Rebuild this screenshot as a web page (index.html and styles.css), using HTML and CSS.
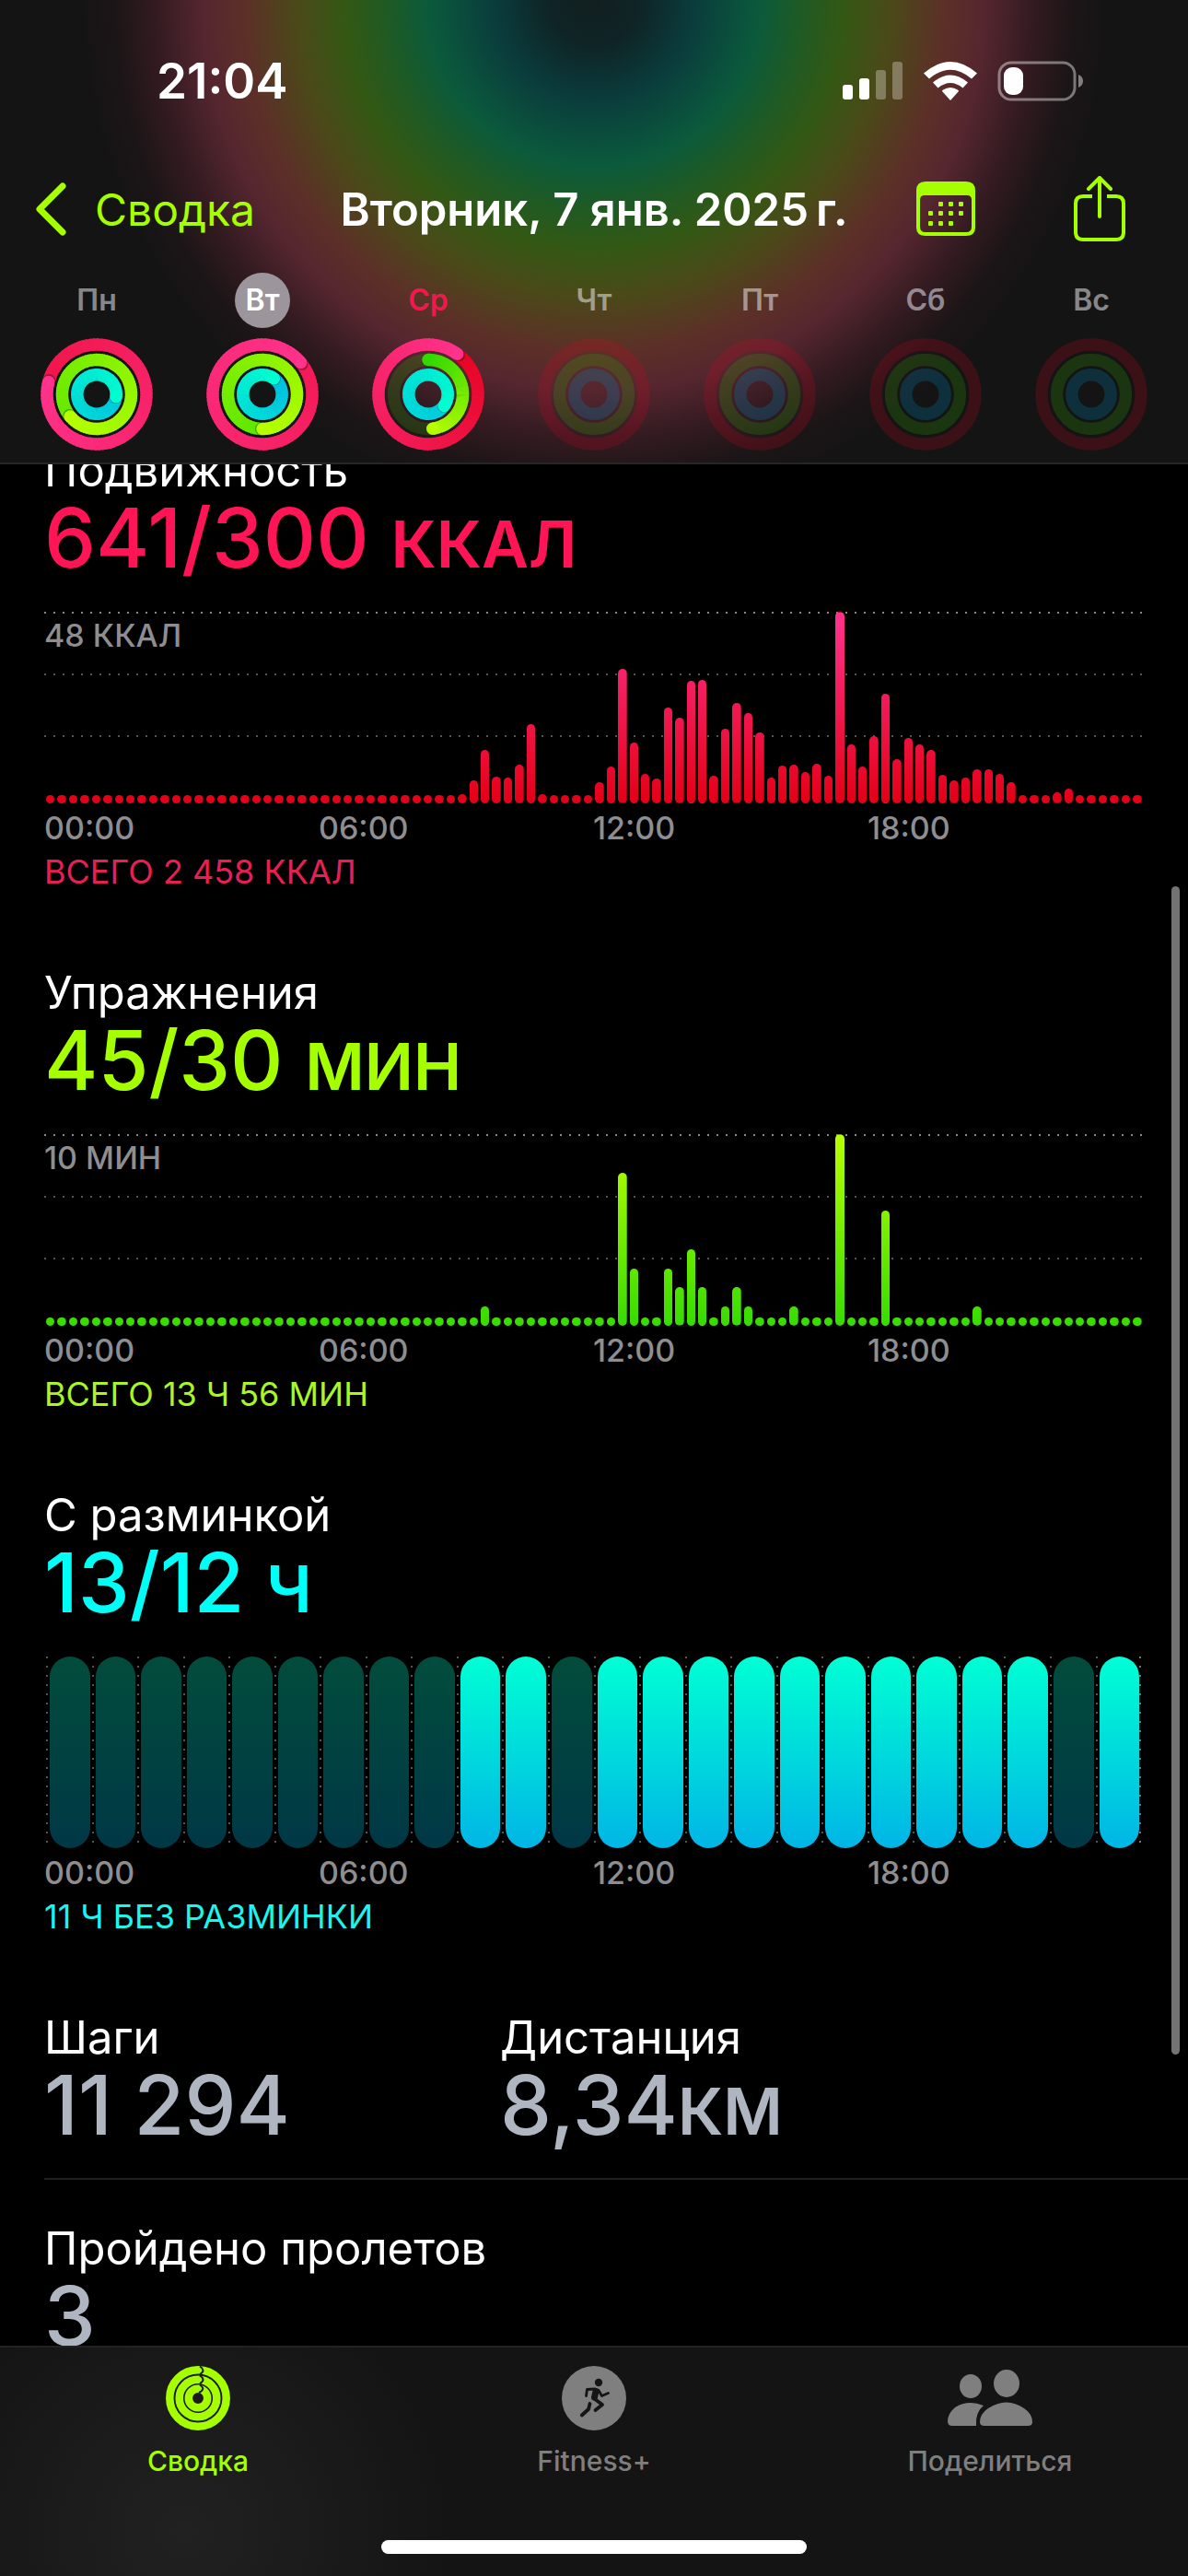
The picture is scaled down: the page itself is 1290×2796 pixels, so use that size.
FILE: index.html
```html
<!DOCTYPE html>
<html lang="ru">
	<head>
		<meta charset="utf-8">
		<title>Фитнес</title>
		<meta name="viewport" content="width=device-width, initial-scale=1">
		<link rel="stylesheet" href="styles.css">
	</head>
	<body>
		<header class="header">
			<!-- Строка состояния -->
			<div class="status">
				<span class="status-time">21:04</span>
				<div class="status-icons">
					<svg width="66" height="42" viewBox="0 0 66 42" fill="#fff">
						<rect x="0" y="25" width="11" height="16" rx="3"/>
						<rect x="18" y="18" width="11" height="23" rx="3"/>
						<rect x="36" y="9" width="11" height="32" rx="3" opacity="0.3"/>
						<rect x="54" y="0" width="11" height="41" rx="3" opacity="0.3"/>
					</svg>
					<svg width="58" height="42" viewBox="0 0 58 42" fill="#fff">
						<path d="M29 42 L20 32 Q20 31 21 30.500 Q29 25.500 37 30.500 Q38 31 38 32 Z"/>
						<path d="M10 22.500 Q29 6.500 48 22.500 L42.500 28.500 Q29 17.500 15.500 28.500 Z"/>
						<path d="M0 12.500 Q29 -12.500 58 12.500 L52 18.500 Q29 -1 6 18.500 Z"/>
					</svg>
					<svg width="94" height="44" viewBox="0 0 94 44">
						<rect x="2" y="2" width="82" height="40" rx="13" fill="none" stroke="#fff" stroke-opacity="0.42" stroke-width="3"/>
						<rect x="7" y="7" width="21" height="30" rx="9" fill="#fff"/>
						<path d="M88 15 q5 2 5 7 t-5 7 Z" fill="#fff" opacity="0.45"/>
					</svg>
				</div>
			</div>

			<!-- Навигация -->
			<nav class="nav">
				<a class="back" href="#">
					<svg width="34" height="58" viewBox="0 0 34 58" fill="none" stroke="currentColor" stroke-width="7" stroke-linecap="round" stroke-linejoin="round">
						<path d="M29 4 L4 29 L29 54"/>
					</svg>
					Сводка
				</a>
				<h1 class="title">Вторник, 7 янв. 2025&#8239;г.</h1>
				<div class="actions">
					<button class="action" aria-label="Календарь">
						<svg width="64" height="60" viewBox="0 0 64 60" fill="currentColor">
							<path fill-rule="evenodd" d="M10 0 H54 Q64 0 64 10 V50 Q64 59 54 59 H10 Q0 59 0 50 V10 Q0 0 10 0 Z M9 15 Q4 15 4 20 V49 Q4 55 10 55 H54 Q60 55 60 49 V20 Q60 15 55 15 Z"/>
							<g>
								<rect x="24" y="22" width="5" height="5" rx="1"/><rect x="35" y="22" width="5" height="5" rx="1"/><rect x="46" y="22" width="5" height="5" rx="1"/>
								<rect x="13" y="32" width="5" height="5" rx="1"/><rect x="24" y="32" width="5" height="5" rx="1"/><rect x="35" y="32" width="5" height="5" rx="1"/><rect x="46" y="32" width="5" height="5" rx="1"/>
								<rect x="13" y="43" width="5" height="5" rx="1"/><rect x="24" y="43" width="5" height="5" rx="1"/><rect x="35" y="43" width="5" height="5" rx="1"/>
							</g>
						</svg>
					</button>
					<button class="action" aria-label="Поделиться">
						<svg width="58" height="72" viewBox="0 0 58 72" fill="none" stroke="currentColor" stroke-width="4" stroke-linecap="round" stroke-linejoin="round">
							<path stroke-linecap="butt" d="M21 22 H11 Q3 22 3 30 V61 Q3 69 11 69 H47 Q55 69 55 61 V30 Q55 22 47 22 H37"/>
							<path d="M29 44 V3 M17 14 L29 2 L41 14"/>
						</svg>
					</button>
				</div>
			</nav>

			<!-- Дни недели, кольца рисует script.js -->
			<div class="week">
				<button class="day" data-rings="1.79 1.64 1.27"><span class="day-name">Пн</span></button>
				<button class="day selected" data-rings="2.14 1.5 1.1"><span class="day-name">Вт</span></button>
				<button class="day today" data-rings="1.1 0.48 1.35"><span class="day-name">Ср</span></button>
				<button class="day" data-rings="0 0 0"><span class="day-name">Чт</span></button>
				<button class="day" data-rings="0 0 0"><span class="day-name">Пт</span></button>
				<button class="day" data-rings="0 0 0"><span class="day-name">Сб</span></button>
				<button class="day" data-rings="0 0 0"><span class="day-name">Вс</span></button>
			</div>
		</header>

		<main class="content">
			<section class="card move">
				<h2 class="card-title">Подвижность</h2>
				<p class="card-value">641/300 <span class="unit">ккал</span></p>
				<div class="chart" id="move-chart">
					<span class="chart-max">48 ККАЛ</span>
				</div>
				<div class="axis"><span>00:00</span><span>06:00</span><span>12:00</span><span>18:00</span></div>
				<p class="total">ВСЕГО 2 458 ККАЛ</p>
			</section>

			<section class="card exercise">
				<h2 class="card-title">Упражнения</h2>
				<p class="card-value">45/30 <span class="unit">мин</span></p>
				<div class="chart" id="exercise-chart">
					<span class="chart-max">10 МИН</span>
				</div>
				<div class="axis"><span>00:00</span><span>06:00</span><span>12:00</span><span>18:00</span></div>
				<p class="total">ВСЕГО 13 Ч 56 МИН</p>
			</section>

			<section class="card stand">
				<h2 class="card-title">С разминкой</h2>
				<p class="card-value">13/12 <span class="unit">ч</span></p>
				<div class="hours" id="stand-chart"></div>
				<div class="axis"><span>00:00</span><span>06:00</span><span>12:00</span><span>18:00</span></div>
				<p class="total">11 Ч БЕЗ РАЗМИНКИ</p>
			</section>

			<div class="metrics">
				<div class="metric">
					<h2 class="card-title">Шаги</h2>
					<p class="card-value">11 294</p>
				</div>
				<div class="metric">
					<h2 class="card-title">Дистанция</h2>
					<p class="card-value">8,34<span class="unit">км</span></p>
				</div>
			</div>
			<div class="metrics">
				<div class="metric">
					<h2 class="card-title">Пройдено пролетов</h2>
					<p class="card-value">3</p>
				</div>
			</div>

			<div class="scrollbar"></div>
		</main>

		<!-- Нижние вкладки -->
		<footer class="tabbar">
			<nav class="tabs">
				<a class="tab active" href="#">
					<svg width="70" height="70" viewBox="0 0 70 70" fill="none" stroke="currentColor" stroke-width="8.500">
						<circle cx="35" cy="35" r="30.700"/>
						<circle cx="35" cy="35" r="20.300"/>
						<circle cx="35" cy="35" r="10.200"/>
						<path stroke="#161a10" stroke-width="2" d="M37 0.500 Q44 5 37 9 M37 10.500 Q44 15 37 19 M37 20.500 Q44 25 36 29"/>
					</svg>
					Сводка
				</a>
				<a class="tab" href="#">
					<svg width="70" height="70" viewBox="0 0 70 70" fill="none" stroke="#151515" stroke-linecap="round" stroke-linejoin="round">
						<circle cx="35" cy="35" r="35" fill="currentColor" stroke="none"/>
						<circle cx="40" cy="18" r="4.200" fill="#151515" stroke="none"/>
						<path stroke-width="2.800" d="M26.500 32.500 L27.500 25.500 L36 25 M40 26.500 L43.500 32.500 L50.500 29.500"/>
						<path stroke-width="7" d="M37 27.500 L35.500 34"/>
						<path stroke-width="3.800" d="M36 36 L44 42 L36.500 48 M30.500 41 L29 47 L21.800 53.500"/>
					</svg>
					Fitness+
				</a>
				<a class="tab" href="#">
					<svg width="94" height="70" viewBox="0 0 94 70" fill="currentColor">
						<ellipse cx="26" cy="22" rx="12" ry="13"/>
						<ellipse cx="65" cy="19" rx="14" ry="15"/>
						<path d="M1 60 Q1 52 9 45 Q23 36 40 43 Q31 50 32 65 H6 Q1 65 1 60 Z"/>
						<path d="M36 61 Q36 52 45 46 Q65 33 84 46 Q93 52 93 61 Q93 65 88 65 H41 Q36 65 36 61 Z"/>
					</svg>
					Поделиться
				</a>
			</nav>
			<div class="home-indicator"></div>
		</footer>

		<script src="script.js"></script>
	</body>
</html>
```

FILE: styles.css
```css
* {
	margin: 0;
	padding: 0;
	box-sizing: border-box;
}

body {
	font-family: Inter, "Liberation Sans", sans-serif;
	background-color: #000;
	color: #fff;
	height: 100vh;
	overflow: hidden;
	display: flex;
	flex-direction: column;
}

button {
	background: none;
	border: none;
	color: inherit;
	font: inherit;
}

a {
	color: inherit;
	text-decoration: none;
}

svg {
	display: block;
}

/* Шапка */
.header {
	position: relative;
	z-index: 2;
	padding-bottom: 13px;
	border-bottom: 2px solid #262626;
	background: radial-gradient(circle at 50% 0,
		#121f20 0, #0f2426 50px, #0a3c3c 108px, #0b5a3c 180px, #1f5a24 226px, #335814 270px,
		#4a4a18 320px, #5c3028 380px, #55262f 425px, #341b21 475px, #1c1517 520px, #141414 560px);
}

.status {
	height: 176px;
	padding: 0 113px 0 170px;
	display: flex;
	align-items: center;
	justify-content: space-between;
}

.status-time {
	font-size: 53px;
	font-weight: 600;
}

.status-icons {
	display: flex;
	align-items: center;
	gap: 22px;
}

.nav {
	height: 102px;
	padding: 0 39px;
	display: grid;
	grid-template-columns: 1fr auto 1fr;
	align-items: center;
	color: #a6ff00;
}

.back {
	display: flex;
	align-items: center;
	gap: 30px;
	font-size: 48px;
}

.title {
	color: #fff;
	font-size: 49px;
	font-weight: 600;
	white-space: nowrap;
}

.actions {
	display: flex;
	align-items: center;
	justify-content: flex-end;
	gap: 106px;
	padding-right: 28px;
}

.week {
	display: grid;
	grid-template-columns: repeat(7, 1fr);
	padding: 18px 15px 0;
}

.day {
	display: flex;
	flex-direction: column;
	align-items: center;
	gap: 11px;
}

.day-name {
	width: 60px;
	height: 60px;
	line-height: 60px;
	border-radius: 50%;
	font-size: 32px;
	font-weight: 600;
	color: rgba(235, 235, 245, 0.55);
}

.selected .day-name {
	background-color: #9c959b;
	color: #fff;
}

.today .day-name {
	color: #f0194d;
}

/* Содержимое, прокручено под шапку */
.content {
	position: relative;
	flex: 1;
	min-height: 0;
	margin-top: -23px;
	padding-left: 48px;
}

.card {
	padding-right: 50px;
	margin-bottom: 75px;
}

.card-title {
	font-size: 49px;
	font-weight: 400;
	line-height: 60px;
}

.card-value {
	font-size: 89px;
	font-weight: 500;
	line-height: 86px;
	white-space: nowrap;
}

.unit {
	font-size: 70px;
	font-weight: 600;
	line-height: 60px;
	text-transform: uppercase;
}

.move .card-value { color: #ff1455; }
.exercise .card-value { color: #a6ff00; }
.stand .card-value { color: #00fff6; }

/* Столбчатые графики */
.chart {
	position: relative;
	height: 208px;
	margin-top: 37px;
	display: flex;
	align-items: flex-end;
}

.gridline {
	position: absolute;
	left: 0;
	right: 0;
	height: 2px;
	background: repeating-linear-gradient(to right, #555 0, #555 2px, transparent 2px, transparent 10px);
}

.gridline:first-of-type {
	filter: brightness(1.6);
}

.chart-max {
	position: absolute;
	top: 8px;
	left: 0;
	font-size: 34px;
	line-height: 36px;
	font-weight: 500;
	color: #8e8e91;
}

.bar {
	position: relative;
	flex: 1;
	min-height: 9px;
	margin: 0 1px 0 2px;
	border-radius: 5px;
	background-position: bottom;
	background-size: 100% 207px;
}

.move .bar { background-image: linear-gradient(to top, #e30016, #ff3290); }
.exercise .bar { background-image: linear-gradient(to top, #36dc00, #b8ff00); }

/* Часы с разминкой */
.hours {
	height: 208px;
	margin: 37px 1px 0 2px;
	display: flex;
	background: repeating-linear-gradient(to bottom, #777 0, #777 2px, transparent 2px, transparent 10px) right / 2px 100% no-repeat;
}

.hour {
	flex: 1;
	padding: 0 2px 0 4px;
	background: repeating-linear-gradient(to bottom, #555 0, #555 2px, transparent 2px, transparent 10px) left / 2px 100% no-repeat;
}

.pill {
	height: 100%;
	border-radius: 22px;
	background: linear-gradient(to bottom, #024c3c, #003846);
}

.pill.on {
	background: linear-gradient(to bottom, #00ffd4, #00b5e6);
}

.axis {
	display: grid;
	grid-template-columns: repeat(4, 1fr);
	margin-top: 7px;
	font-size: 34px;
	font-weight: 500;
	line-height: 40px;
	color: #8e8e91;
}

.total {
	font-size: 36px;
	line-height: 54px;
}

.move .total { color: #e81f55; }
.exercise .total { color: #a8f722; }
.stand .total { color: #1cf5ea; }

/* Показатели */
.metrics {
	display: grid;
	grid-template-columns: 495px 1fr;
	padding-bottom: 36px;
	margin-bottom: 45px;
	border-bottom: 2px solid #202022;
}

.metric .card-value {
	color: #b0b5c2;
}

.scrollbar {
	position: absolute;
	top: 23.3%;
	right: 9px;
	width: 9px;
	height: 61.4%;
	border-radius: 5px;
	background-color: #737373;
}

/* Нижняя панель */
.tabbar {
	position: relative;
	z-index: 2;
	height: 250px;
	padding: 20px 0 24px;
	border-top: 2px solid #222;
	display: flex;
	flex-direction: column;
	justify-content: space-between;
	background: radial-gradient(circle at 200px 200px, #212121 0, #1b1b1b 140px, #141414 290px);
}

.tabs {
	display: grid;
	grid-template-columns: repeat(3, 1fr);
}

.tab {
	display: flex;
	flex-direction: column;
	align-items: center;
	gap: 15px;
	font-size: 30px;
	line-height: 36px;
	font-weight: 500;
	color: #7f7f7f;
}

.tab.active {
	color: #a6ff00;
}

.home-indicator {
	width: 462px;
	height: 15px;
	margin: 0 auto;
	border-radius: 8px;
	background-color: #fff;
}
```

FILE: script.js
```js
// Данные по 15 минут: сначала пустые интервалы, затем значения
const moveData = new Array(96).fill(0);
const moveValues = {
	36: [10, 25, 58, 29, 28, 42, 86, 10],
	48: [23, 40, 145, 66, 32, 27, 104, 93, 132, 133, 30, 81, 108, 98, 77, 28, 41, 42, 34, 43, 30,
		207, 64, 40, 73, 118, 48, 71, 64, 58, 31, 25, 28, 37, 37, 32, 23],
	88: [12, 16]
};
for (const start in moveValues) {
	moveValues[start].forEach((v, i) => moveData[Number(start) + i] = v);
}

const exerciseData = new Array(96).fill(0);
Object.entries({38: 1, 50: 8, 51: 3, 54: 3, 55: 2, 56: 4, 57: 2, 59: 1, 60: 2, 61: 1, 65: 1, 69: 10, 73: 6, 81: 1})
	.forEach(([i, v]) => exerciseData[i] = v);

const standHours = [9, 10, 12, 13, 14, 15, 16, 17, 18, 19, 20, 21, 23];

function drawChart(id, data) {
	const chart = document.getElementById(id);
	const max = Math.max(...data);
	for (let i = 0; i < 3; i++) {
		const line = document.createElement('div');
		line.className = 'gridline';
		line.style.top = i * 32.2 + '%';
		chart.appendChild(line);
	}
	data.forEach(v => {
		const bar = document.createElement('div');
		bar.className = 'bar';
		bar.style.height = v / max * 100 + '%';
		chart.appendChild(bar);
	});
}

function drawHours() {
	const chart = document.getElementById('stand-chart');
	for (let h = 0; h < 24; h++) {
		const hour = document.createElement('div');
		hour.className = 'hour';
		hour.innerHTML = '<div class="pill' + (standHours.includes(h) ? ' on' : '') + '"></div>';
		chart.appendChild(hour);
	}
}

// Кольца: радиус, цвет начала, цвет конца, цвет пустой дорожки
const ringTypes = [
	{r: 54, from: [228, 0, 24], to: [255, 50, 140], track: 'rgba(230, 0, 30, 0.19)'},
	{r: 37.5, from: [50, 218, 0], to: [182, 255, 0], track: 'rgba(50, 160, 10, 0.24)'},
	{r: 21.2, from: [0, 184, 228], to: [0, 255, 208], track: 'rgba(0, 130, 180, 0.26)'}
];

function mix(a, b, t) {
	return 'rgb(' + a.map((c, i) => Math.round(c + (b[i] - c) * t)).join(',') + ')';
}

function point(r, turn) {
	const a = turn * Math.PI * 2;
	return [61 + r * Math.sin(a), 61 - r * Math.cos(a)];
}

function drawRing(type, progress) {
	if (!progress) {
		return `<circle cx="61" cy="61" r="${type.r}" stroke="${type.track}"/>`;
	}
	let out = '';
	if (progress < 1) {
		out += `<circle cx="61" cy="61" r="${type.r}" stroke="${type.track}"/>`;
		const [x, y] = point(type.r, 0);
		out += `<circle cx="${x}" cy="${y}" r="6.7" fill="${mix(type.from, type.to, 0)}" stroke="none"/>`;
	}
	const start = Math.max(0, progress - 1);
	const steps = 90;
	const len = (progress - start) / steps;
	for (let i = 0; i < steps; i++) {
		const a = start + i * len;
		const [x1, y1] = point(type.r, a);
		const [x2, y2] = point(type.r, Math.min(a + len * 1.4, progress));
		out += `<path d="M${x1} ${y1} A${type.r} ${type.r} 0 0 1 ${x2} ${y2}" stroke="${mix(type.from, type.to, a / progress)}"/>`;
	}
	const [sx, sy] = point(type.r, progress + 0.006);
	const [x, y] = point(type.r, progress);
	if (progress > 1) {
		out += `<circle cx="${sx}" cy="${sy}" r="6.7" fill="rgba(0,0,0,0.3)" stroke="none"/>`;
	}
	out += `<circle cx="${x}" cy="${y}" r="6.7" fill="${mix(type.from, type.to, 1)}" stroke="none"/>`;
	return out;
}

document.querySelectorAll('.day').forEach(day => {
	const values = day.dataset.rings.split(' ').map(Number);
	const rings = values.map((v, i) => drawRing(ringTypes[i], v)).join('');
	day.insertAdjacentHTML('beforeend',
		`<svg width="122" height="122" viewBox="0 0 122 122" fill="none" stroke-width="13.4">${rings}</svg>`);
});

drawChart('move-chart', moveData);
drawChart('exercise-chart', exerciseData);
drawHours();
```
